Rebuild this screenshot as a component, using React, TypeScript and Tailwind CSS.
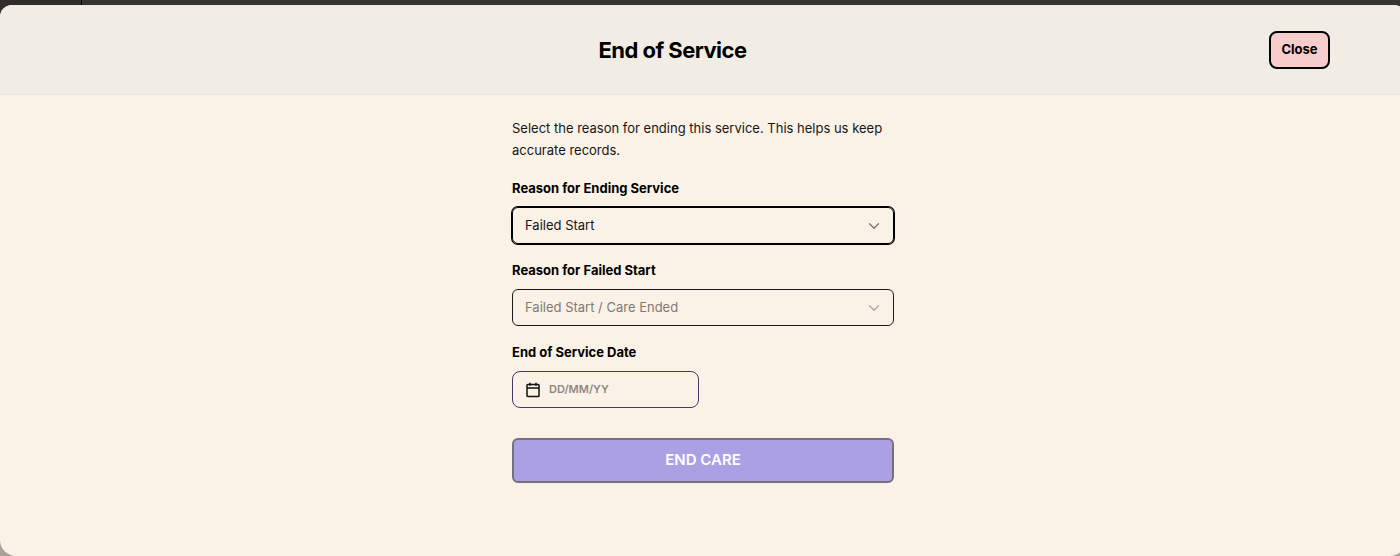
import { useState } from "react";
import type { ReactNode, SelectHTMLAttributes } from "react";
import { ChevronDown } from "lucide-react";

const endReasons = ["Failed Start", "Care Completed", "Moved Away"];
const failedStartReasons = ["Failed Start / Care Ended", "Client Declined"];

function Field({ id, label, children }: { id: string; label: string; children: ReactNode }) {
  return (
    <div className="flex flex-col gap-[9px]">
      <label htmlFor={id} className="text-[13px] leading-5 font-bold text-black">
        {label}
      </label>
      {children}
    </div>
  );
}

type SelectProps = SelectHTMLAttributes<HTMLSelectElement> & { options: string[] };

function Select({ options, ...props }: SelectProps) {
  return (
    <div className="relative">
      <select
        {...props}
        className="peer block h-[37px] w-full appearance-none rounded-md border border-[#1c1c1c] bg-transparent px-3 text-[13px] text-[#161616] outline-none focus:ring-1 focus:ring-black focus:border-black disabled:text-[#7f7a75] disabled:opacity-100"
      >
        {options.map((option) => (
          <option key={option}>{option}</option>
        ))}
      </select>
      <ChevronDown
        className="pointer-events-none absolute right-[11px] top-[10px] size-[18px] text-[#77736e] peer-disabled:text-[#aea8a1]"
        strokeWidth={1.75}
      />
    </div>
  );
}

function CalendarIcon() {
  return (
    <svg viewBox="0 0 14 16" className="h-4 w-[14px] shrink-0" fill="none" stroke="#111" strokeWidth="1.5" strokeLinejoin="round">
      <rect x="1" y="2.5" width="12" height="12" rx="0.8" />
      <path d="M1 6h12M4 0.8v3M10 0.8v3" />
    </svg>
  );
}

export default function App() {
  const [reason, setReason] = useState(endReasons[0]);
  const [date, setDate] = useState("");

  return (
    <div className="relative flex min-h-screen flex-col overflow-hidden bg-linear-to-b from-[#343435] from-50% to-[#a8a29a] to-50% pt-[5px] font-['Inter',sans-serif]">
      {/* sidebar edge of the page behind the sheet */}
      <div className="absolute left-0 top-0 h-5 w-[82px] border-r border-black bg-[#302d2d]" />

      <div className="relative -mr-[6px] flex flex-1 flex-col overflow-hidden rounded-t-xl rounded-b-2xl bg-[#faf1e7]">
        <header className="flex items-center border-b border-[#e8e5df] bg-[#f1ede5] px-[76px] pt-[26px] pb-[25px]">
          <h1 className="flex-1 text-center text-[22px] leading-7 font-bold tracking-tight text-black">
            End of Service
          </h1>
          <button
            type="button"
            className="h-[38px] w-[61px] rounded-lg border-2 border-black bg-[#f6cccc] text-[13px] font-bold text-black"
          >
            Close
          </button>
        </header>

        <form className="mx-auto flex w-full max-w-[382px] flex-col pt-[22px] pb-16" onSubmit={(e) => e.preventDefault()}>
          <p className="mb-[17px] text-[13px] leading-[22px] text-[#161616]">
            Select the reason for ending this service. This helps us keep accurate records.
          </p>

          <div className="flex flex-col gap-4">
            <Field id="reason" label="Reason for Ending Service">
              <Select
                id="reason"
                autoFocus
                options={endReasons}
                value={reason}
                onChange={(e) => setReason(e.target.value)}
              />
            </Field>

            <Field id="failed-reason" label="Reason for Failed Start">
              <Select id="failed-reason" options={failedStartReasons} disabled />
            </Field>

            <Field id="end-date" label="End of Service Date">
              <div className="flex h-[37px] w-[187px] items-center gap-[9px] rounded-lg border border-[#443a66] px-[13px]">
                <CalendarIcon />
                <input
                  id="end-date"
                  type="text"
                  placeholder="DD/MM/YY"
                  value={date}
                  onChange={(e) => setDate(e.target.value)}
                  className="w-full min-w-0 bg-transparent text-[11px] font-semibold text-black outline-none placeholder:text-[#8d8780]"
                />
              </div>
            </Field>
          </div>

          <button
            type="submit"
            disabled
            className="mt-[30px] h-[45px] rounded-md border-2 border-[#77717a] bg-[#aca0e4] text-[15px] font-semibold text-white"
          >
            END CARE
          </button>
        </form>
      </div>
    </div>
  );
}
